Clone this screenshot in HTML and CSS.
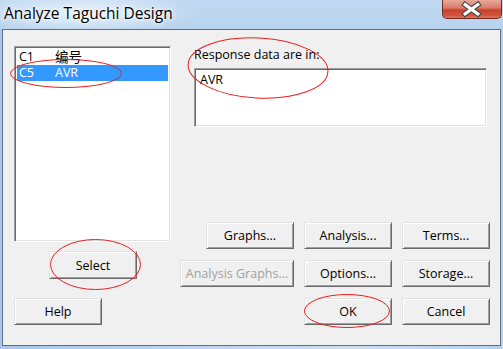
FILE: index.html
```html
<!DOCTYPE html>
<html>
<head>
<meta charset="utf-8">
<link rel="stylesheet" href="styles.css">
</head>
<body>
<div class="window">
  <div class="titlebar">
    <span class="title">Analyze Taguchi Design</span>
    <div class="close">
      <svg width="60" height="19" viewBox="0 0 60 19">
        <path d="M23.5 4.5 L36.5 14 M36.5 4.5 L23.5 14" stroke="#4a4a4a" stroke-width="5.5" stroke-linecap="square"/>
        <path d="M23.5 4.5 L36.5 14 M36.5 4.5 L23.5 14" stroke="#ffffff" stroke-width="3.2" stroke-linecap="square"/>
      </svg>
    </div>
  </div>
  <div class="client">
    <div class="left">
      <div class="listbox">
        <div class="row"><span class="colname">C1</span><span class="cjk">编号</span></div>
        <div class="row sel"><span class="colname">C5</span><span>AVR</span></div>
      </div>
      <button class="btn select">Select</button>
      <button class="btn help">Help</button>
    </div>
    <div class="right">
      <div class="label">Response data are in:</div>
      <div class="textbox">AVR</div>
      <div class="btngrid">
        <button class="btn end">Graphs...</button>
        <button class="btn">Analysis...</button>
        <button class="btn">Terms...</button>
        <button class="btn disabled">Analysis Graphs...</button>
        <button class="btn">Options...</button>
        <button class="btn">Storage...</button>
        <button class="btn c2">OK</button>
        <button class="btn">Cancel</button>
      </div>
    </div>
  </div>
  <svg class="marks" width="503" height="349" viewBox="0 0 503 349">
    <ellipse cx="66" cy="73.5" rx="55.5" ry="14" />
    <ellipse cx="258" cy="68" rx="70" ry="30" transform="rotate(3 258 68)" />
    <ellipse cx="95.5" cy="264.5" rx="45" ry="25" />
    <ellipse cx="347" cy="311" rx="42.5" ry="16.5" />
  </svg>
</div>
</body>
</html>
```

FILE: styles.css
```css
* { box-sizing: border-box; }
html, body { margin: 0; padding: 0; }
body {
  width: 503px;
  height: 349px;
  overflow: hidden;
  font-family: "Open Sans", "Noto Sans CJK SC", sans-serif;
  font-size: 12.5px;
  color: #000;
}
.window {
  position: relative;
  width: 503px;
  height: 349px;
  background: linear-gradient(90deg, #a9c8ea 0%, #bcd6f1 40%, #c9e0f5 70%, #b4d1ee 100%);
  display: flex;
  flex-direction: column;
}
.titlebar {
  height: 29px;
  display: flex;
  align-items: flex-start;
  background: radial-gradient(ellipse 110px 22px at 85px 13px, rgba(235,244,252,0.95), rgba(235,244,252,0) 100%),
              linear-gradient(180deg, #c1d9f2 0%, #b8d3ee 100%);
}
.title {
  font-family: "Open Sans", sans-serif;
  font-size: 15.5px;
  line-height: 20px;
  padding: 3px 0 0 4px;
  color: #000;
  text-shadow: 0 0 6px #fff, 0 0 3px #fff;
}
.close {
  margin-left: auto;
  margin-right: 1px;
  width: 60px;
  height: 19px;
  border: 1px solid #6e2c24;
  border-top: none;
  border-radius: 0 0 5px 5px;
  background: linear-gradient(180deg, #e9a99a 0%, #d77a66 45%, #c7432d 55%, #d2533a 85%, #e07a5c 100%);
  overflow: hidden;
  display: flex;
  align-items: center;
  justify-content: center;
}
.close svg { display: block; margin-left: -1px; }
.client {
  margin: 0 2px;
  height: 317px;
  border: 1px solid #5d7087;
  background: #f0f0f0;
  display: flex;
  padding: 16px 0 0 11px;
}
.left {
  width: 157px;
  display: flex;
  flex-direction: column;
  align-items: flex-start;
}
.listbox {
  width: 157px;
  height: 196px;
  background: #fff;
  border-style: solid;
  border-width: 1px;
  border-color: #a0a0a0 #fff #fff #a0a0a0;
  box-shadow: inset 1px 1px #696969, inset -1px -1px #e3e3e3;
  padding: 2px 2px;
}
.row {
  height: 16px;
  line-height: 16px;
  display: flex;
  align-items: center;
  padding-left: 2px;
  overflow: hidden;
}
.row .colname { width: 36px; }
.row .cjk { font-size: 13.5px; line-height: 15px; height: 15px; }
.row.sel { background: #3399ff; color: #fff; }
.btn {
  font-family: "Open Sans", sans-serif;
  font-size: 12.5px;
  color: #000;
  background: #f0f0f0;
  width: 88px;
  height: 27px;
  padding: 0;
  margin: 0;
  border-style: solid;
  border-width: 1px;
  border-color: #e3e3e3 #696969 #696969 #e3e3e3;
  box-shadow: inset 1px 1px #fff, inset -1px -1px #a0a0a0;
  line-height: 23px;
  text-align: center;
}
.select { margin: 9px 0 0 35px; height: 28px; }
.help { margin-top: 19px; }
.right {
  margin-left: 9px;
  width: 310px;
  display: flex;
  flex-direction: column;
}
.label {
  margin-left: 14px;
  line-height: 16px;
  height: 16px;
  margin-top: 1px;
}
.textbox {
  margin: 5px 0 0 14px;
  width: 293px;
  height: 59px;
  background: #fff;
  border-style: solid;
  border-width: 1px;
  border-color: #a0a0a0 #fff #fff #a0a0a0;
  box-shadow: inset 1px 1px #696969, inset -1px -1px #e3e3e3;
  padding: 3px 0 0 5px;
  line-height: 16px;
}
.btngrid {
  margin-top: 95px;
  display: grid;
  grid-template-columns: 114px 88px 88px;
  grid-auto-rows: 27px;
  column-gap: 10px;
  row-gap: 11px;
}
.btngrid .end { justify-self: end; }
.btngrid .disabled { width: 114px; color: #a0a0a0; }
.btngrid .c2 { grid-column: 2; }
.marks {
  position: absolute;
  left: 0;
  top: 0;
  pointer-events: none;
}
.marks ellipse {
  fill: none;
  stroke: #ee1c1c;
  stroke-width: 1;
}
```
